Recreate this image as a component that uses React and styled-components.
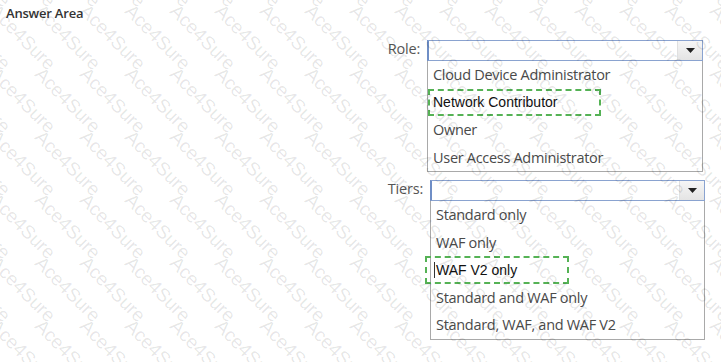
import React from 'react';
import styled, { createGlobalStyle } from 'styled-components';

const GlobalStyle = createGlobalStyle`
  html, body {
    margin: 0;
    padding: 0;
    background: #fff;
  }
  body {
    font-family: "Open Sans", "Liberation Sans", sans-serif;
  }
`;

const Page = styled.div`
  position: relative;
  width: 721px;
  height: 362px;
  overflow: hidden;
  padding: 5px 6px;
  box-sizing: border-box;
`;

const Title = styled.div`
  font-size: 13px;
  font-weight: 600;
  line-height: 16px;
  color: #333;
  letter-spacing: -0.2px;
`;

const Group = styled.div`
  display: flex;
  align-items: flex-start;
  margin-top: ${(p) => p.$top}px;
  margin-left: -6px;
`;

const Label = styled.div`
  width: ${(p) => p.$width}px;
  box-sizing: border-box;
  padding-right: 7px;
  text-align: right;
  font-size: 14.5px;
  line-height: 18px;
  color: #555;
  letter-spacing: -0.2px;
`;

const Dropdown = styled.div`
  width: ${(p) => p.$width}px;
  display: flex;
  flex-direction: column;
`;

const Select = styled.div`
  height: 21px;
  box-sizing: border-box;
  border: 1px solid #8aa3d0;
  border-left: 2px solid #6f8ec6;
  display: flex;
  justify-content: flex-end;
  background: #fff;
`;

const Arrow = styled.div`
  width: 24px;
  display: flex;
  align-items: center;
  justify-content: center;
  background: linear-gradient(#f6f6f6, #e4e4e4);
  border-left: 1px solid #e0e0e0;
`;

const List = styled.div`
  border: 1px solid #a9a9a9;
  border-top: none;
  background: #fff;
`;

const Item = styled.div`
  position: relative;
  height: 27.5px;
  display: flex;
  align-items: center;
  padding-left: 5px;
  font-size: ${(p) => (p.$plain ? '14px' : '14.5px')};
  font-family: ${(p) => (p.$plain ? '"Liberation Sans", Arial, sans-serif' : '"Open Sans", sans-serif')};
  color: ${(p) => (p.$plain ? '#111' : '#4a4a4a')};
  letter-spacing: ${(p) => (p.$plain ? '0' : '-0.3px')};
  white-space: nowrap;
`;

const Marker = styled.div`
  position: absolute;
  top: 0;
  bottom: 0;
  left: ${(p) => p.$left}px;
  width: ${(p) => p.$width}px;
  border: 2px dashed #55b255;
  box-sizing: border-box;
`;

const Caret = styled.span`
  display: inline-block;
  width: 1px;
  height: 16px;
  background: #333;
  margin-right: 1px;
  margin-left: -2px;
`;

const Watermark = styled.div`
  position: absolute;
  inset: 0;
  pointer-events: none;
`;

const Mark = styled.span`
  position: absolute;
  transform: rotate(45deg);
  transform-origin: 0 0;
  font-family: "Liberation Sans", Arial, sans-serif;
  font-size: 19px;
  line-height: 19px;
  color: rgba(0, 0, 0, 0.1);
  white-space: nowrap;
`;

function ArrowIcon() {
  return (
    <svg width="9" height="5" viewBox="0 0 9 5">
      <path d="M0 0 H9 L4.5 5 Z" fill="#222" />
    </svg>
  );
}

function Field({ label, labelWidth, width, top, items }) {
  return (
    <Group $top={top}>
      <Label $width={labelWidth}>{label}</Label>
      <Dropdown $width={width}>
        <Select>
          <Arrow><ArrowIcon /></Arrow>
        </Select>
        <List>
          {items.map((it) => (
            <Item key={it.text} $plain={it.marker}>
              {it.caret && <Caret />}
              {it.text}
              {it.marker && <Marker $left={it.marker[0]} $width={it.marker[1]} />}
            </Item>
          ))}
        </List>
      </Dropdown>
    </Group>
  );
}

const marks = [];
for (let m = -3; m <= 4; m++) {
  for (let k = -2; k <= 16; k++) {
    marks.push({ x: k * 45, y: 127 + m * 63 });
  }
}

export default function App() {
  return (
    <>
      <GlobalStyle />
      <Page>
        <Title>Answer Area</Title>
        <Field
          label="Role:"
          labelWidth={427}
          width={276}
          top={19}
          items={[
            { text: 'Cloud Device Administrator' },
            { text: 'Network Contributor', marker: [0, 173] },
            { text: 'Owner' },
            { text: 'User Access Administrator' },
          ]}
        />
        <Field
          label="Tiers:"
          labelWidth={430}
          width={275}
          top={8}
          items={[
            { text: 'Standard only' },
            { text: 'WAF only' },
            { text: 'WAF V2 only', marker: [-6, 144], caret: true },
            { text: 'Standard and WAF only' },
            { text: 'Standard, WAF, and WAF V2' },
          ]}
        />
        <Watermark>
          {marks.map((p, i) => (
            <Mark key={i} style={{ left: p.x, top: p.y }}>Ace4Sure</Mark>
          ))}
        </Watermark>
      </Page>
    </>
  );
}
